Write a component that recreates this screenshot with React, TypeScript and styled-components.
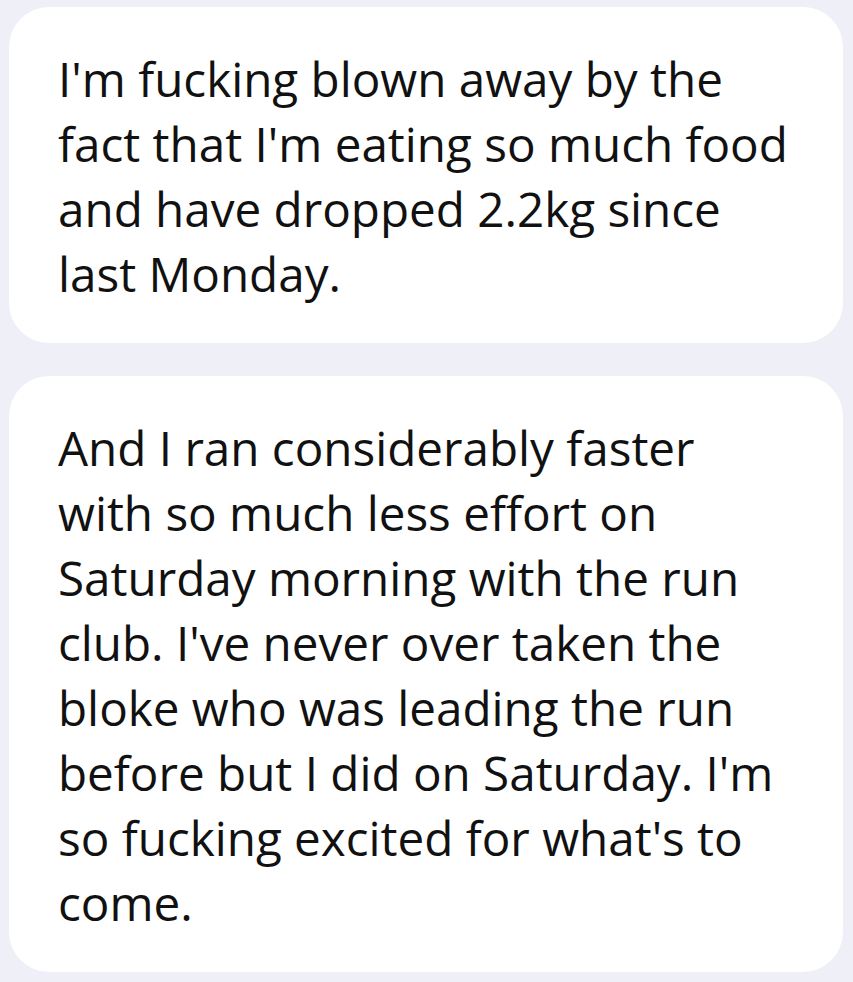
import React from 'react'
import styled, { createGlobalStyle } from 'styled-components'

const GlobalStyle = createGlobalStyle`
  html, body {
    margin: 0;
    padding: 0;
    background: #efeff7;
  }
`

const messages = [
  "I'm fucking blown away by the fact that I'm eating so much food and have dropped 2.2kg since last Monday.",
  "And I ran considerably faster with so much less effort on Saturday morning with the run club. I've never over taken the bloke who was leading the run before but I did on Saturday. I'm so fucking excited for what's to come.",
]

function App() {
  return (
    <Page>
      <GlobalStyle />
      {messages.map((text, i) => (
        <Card key={i}>
          <Text>{text}</Text>
        </Card>
      ))}
    </Page>
  )
}

const Page = styled.div`
  width: 853px;
  height: 982px;
  box-sizing: border-box;
  padding: 7px 10px 0 9px;
  display: flex;
  flex-direction: column;
  gap: 33px;
  background: #efeff7;
`

const Card = styled.div`
  background: #ffffff;
  border-radius: 40px;
  padding: 39px 50px 37px 49px;
`

const Text = styled.p`
  margin: 0;
  font-family: 'Open Sans', 'Noto Sans', sans-serif;
  font-size: 47.6px;
  line-height: 65px;
  color: #111111;
`

export default App
